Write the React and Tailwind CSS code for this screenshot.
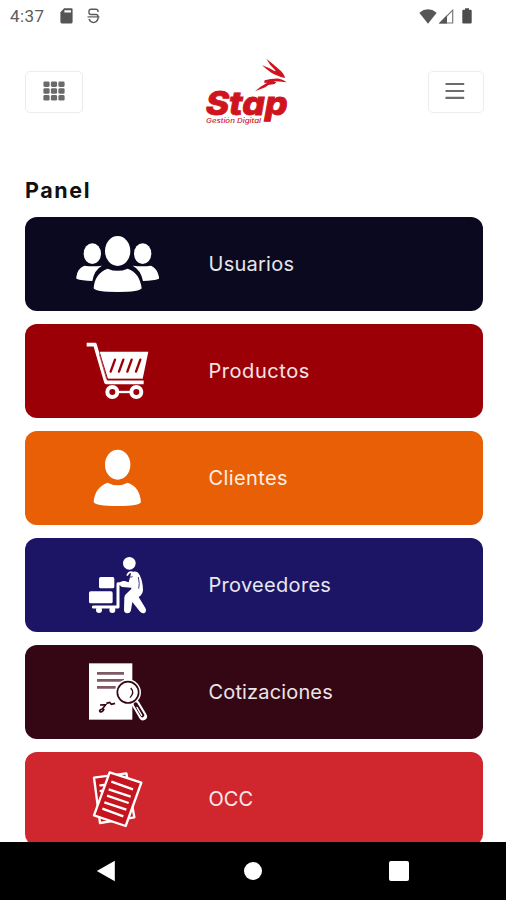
import React from 'react';

// --- Status Bar Icons ---

const SdCardIcon = () => (
  <svg className="w-[13px] h-4" viewBox="0 0 13 16" fill="#555555">
    <path fillRule="evenodd" d="M4.2 0.3H11.3Q12.6 0.3 12.6 1.6V14Q12.6 15.4 11.3 15.4H1.7Q0.4 15.4 0.4 14V4.2ZM4.4 2.2V4.6H11V2.2Z" />
  </svg>
);

const DebugIcon = () => (
  <svg className="w-[13px] h-4" viewBox="0 0 13 16" fill="none" stroke="#5a5a5a" strokeWidth="1.4">
    <path d="M11 4V3Q11 1.2 9 1.2H4Q2 1.2 2 3V4.5Q2 6.5 4 6.5H9Q11 6.5 11 8.5V11Q10 14 6.5 14.6Q3 14 2 11" />
    <path d="M0.5 8.9H12.5" strokeWidth="1.2" />
  </svg>
);

const WifiIcon = () => (
  <svg className="w-[18px] h-[15px]" viewBox="0 0 18 15" fill="#565656">
    <path d="M0.3 3.7Q9 -3 17.7 3.7L9 14.7Z" />
  </svg>
);

const SignalIcon = () => (
  <svg className="w-4 h-[15px]" viewBox="0 0 16 15">
    <path d="M2 14L14.7 1.2V14Z" fill="none" stroke="#7a7a7a" strokeWidth="1.2" />
    <path d="M1 14.5L9 6.3V14.5Z" fill="#565656" />
  </svg>
);

const BatteryIcon = () => (
  <svg className="w-[10px] h-4" viewBox="0 0 10 16" fill="#4d4d4d">
    <path d="M3 0.3H7V1.7H8.6Q9.7 1.7 9.7 2.8V14.5Q9.7 15.6 8.6 15.6H1.4Q0.3 15.6 0.3 14.5V2.8Q0.3 1.7 1.4 1.7H3Z" />
  </svg>
);

// --- Header Icons ---

const GridIcon = () => (
  <svg className="w-[22px] h-5 mb-[2px]" viewBox="0 0 22 20" fill="#6a6a6a">
    {[0.4, 7.9, 15.4].map((x) =>
      [0.4, 7.2, 14].map((y) => (
        <rect key={`${x}-${y}`} x={x} y={y} width="6.2" height="5.6" rx="1.4" />
      ))
    )}
  </svg>
);

const MenuIcon = () => (
  <svg className="w-5 h-[18px] mb-[2px] mr-[2px]" viewBox="0 0 20 18" stroke="#6c6c6c" strokeWidth="2.2">
    <path d="M0.5 2H19.2M0.5 9H19.2M0.5 15.8H19.2" />
  </svg>
);

const Logo = () => (
  <svg className="w-[105px] h-20" viewBox="0 0 315 240" fill="#cf1420">
    <path d="M214 26Q236 43 251 57Q267 69 270 84Q244 77 229 68Q210 55 201 46Q222 53 240 64L242 62Q224 46 214 26Z" />
    <path d="M209 91Q229 85 252 86Q265 88 275 97Q251 94 235 94L244 97L239 102L220 105L211 112L180 124Q194 111 209 103L216 98H207Z" />
    <text x="32" y="194" fontFamily="Inter, sans-serif" fontWeight="800" fontStyle="italic" fontSize="96" stroke="#cf1420" strokeWidth="2.5" textLength="246" lengthAdjust="spacingAndGlyphs">Stap</text>
    <text x="33" y="219" fontFamily="Inter, sans-serif" fontWeight="500" fontStyle="italic" fontSize="18" textLength="165" lengthAdjust="spacingAndGlyphs">Gestión Digital</text>
  </svg>
);

// --- Panel Icons ---

const UsersIcon = () => (
  <svg className="w-[120px] h-[90px]" viewBox="0 -3 360 270" fill="white">
    <ellipse cx="97" cy="101" rx="26" ry="31" />
    <ellipse cx="248" cy="101" rx="26" ry="31" />
    <path d="M49 171Q52 145 73 137Q98 141 126 137Q103 149 97 183Q65 182 49 176Z" />
    <path d="M297 171Q292 145 273 137Q248 141 218 137Q242 149 249 183Q281 182 297 176Z" />
    <ellipse cx="173" cy="93" rx="38" ry="45" />
    <path d="M101 205Q104 160 143 146Q172 159 203 146Q239 158 245 205Q240 216 173 216Q106 216 101 205Z" />
  </svg>
);

const CartIcon = () => (
  <svg className="w-[120px] h-[90px]" viewBox="0 -6 360 270">
    <path d="M119 71H265L248 152H144Z" fill="white" />
    <path d="M80 50H105L138 163H251" fill="none" stroke="white" strokeWidth="11" strokeLinejoin="round" />
    <path d="M118 78L140 154H244" fill="none" stroke="#9c0007" strokeWidth="2" />
    <path d="M165 95L152 131M190 95L177 131M215 95L202 131M241 95L228 131" stroke="#9c0007" strokeWidth="7" strokeLinecap="round" />
    <path d="M157 192H229" stroke="white" strokeWidth="7" />
    <circle cx="157" cy="192" r="15" fill="#9c0007" stroke="white" strokeWidth="12" />
    <circle cx="229" cy="192" r="15" fill="#9c0007" stroke="white" strokeWidth="12" />
  </svg>
);

const UserIcon = () => (
  <svg className="w-[120px] h-[90px]" viewBox="0 -6 360 270" fill="white">
    <ellipse cx="173" cy="89" rx="38" ry="45" />
    <path d="M101 201Q104 157 143 143Q172 159 203 143Q239 155 243 201Q239 213 173 213Q106 213 101 201Z" />
  </svg>
);

const SupplierIcon = () => (
  <svg className="w-[120px] h-[90px]" viewBox="0 -6 360 270" fill="white">
    <circle cx="208" cy="64" r="19" />
    <rect x="117" y="105" width="46" height="34" rx="5" />
    <rect x="87" y="148" width="71" height="36" rx="5" />
    <path d="M198 125H174V195H100" fill="none" stroke="white" strokeWidth="9" strokeLinejoin="round" strokeLinecap="round" />
    <circle cx="117" cy="204" r="9" />
    <circle cx="157" cy="204" r="9" />
    <path d="M214 91Q231 84 239 99Q249 120 249 145Q248 158 236 165L256 198Q261 208 254 213Q246 216 239 208L217 180L213 204Q211 214 202 214Q192 213 192 203L193 166Q194 158 202 152L214 141V137L187 135Q178 132 180 122Q182 116 194 117L206 121Z" />
    <path d="M208 103Q213 109 218 103M235 105Q240 127 236 140" fill="none" stroke="#1c1464" strokeWidth="2.5" />
    <path d="M201 101Q207 87 219 92" fill="none" stroke="white" strokeWidth="5" />
  </svg>
);

const QuoteIcon = () => (
  <svg className="w-[120px] h-[90px]" viewBox="0 -3 360 270">
    <rect x="87" y="46" width="130" height="169" fill="white" />
    <path d="M111 76H192M111 97H192M111 118H167" stroke="#7d5a63" strokeWidth="8" />
    <path d="M120 171L137 170L127 183Q116 186 120 191Q128 194 132 182M139 166L149 163L154 169L165 166" fill="none" stroke="#350614" strokeWidth="5" />
    <path d="M227 168L249 205" stroke="white" strokeWidth="24" strokeLinecap="round" />
    <circle cx="204" cy="133" r="39" fill="white" />
    <path d="M227 169L247 202" stroke="#350614" strokeWidth="12" strokeLinecap="round" />
    <path d="M231 178L245 202" stroke="white" strokeWidth="4" strokeLinecap="round" />
    <circle cx="204" cy="133" r="32" fill="white" stroke="#350614" strokeWidth="5" />
    <path d="M212 120Q225 133 210 149" fill="none" stroke="#350614" strokeWidth="4" />
  </svg>
);

const OrdersIcon = () => (
  <svg className="w-[120px] h-[90px]" viewBox="0 -3 360 270" fill="#c5161f" stroke="white" strokeWidth="7" strokeLinejoin="round" strokeLinecap="round">
    <path d="M102 68L199 55L223 187L120 204Z" />
    <path d="M121 91L132 90M122 108L129 107" />
    <path d="M149 52L244 83L197 213L102 181Z" />
    <path d="M154 80L219 103M146 103L212 125M141 122L206 144M133 142L199 164M127 161L190 184" strokeLinecap="butt" />
  </svg>
);

const panelItems = [
  { label: 'Usuarios', icon: UsersIcon, color: 'bg-[#0b091f]', spacing: 'tracking-[0.25px]' },
  { label: 'Productos', icon: CartIcon, color: 'bg-[#9c0007]', spacing: 'tracking-[0.55px]' },
  { label: 'Clientes', icon: UserIcon, color: 'bg-[#e85f05]', spacing: 'tracking-[0.4px]' },
  { label: 'Proveedores', icon: SupplierIcon, color: 'bg-[#1c1464]', spacing: 'tracking-[0.3px]' },
  { label: 'Cotizaciones', icon: QuoteIcon, color: 'bg-[#350614]', spacing: 'tracking-[0.15px]' },
  { label: 'OCC', icon: OrdersIcon, color: 'bg-[#d0272f]', spacing: 'tracking-normal' },
];

// --- Page Sections ---

function StatusBar() {
  return (
    <div className="h-8 shrink-0 flex items-center justify-between pl-[10px] pr-[34px]">
      <div className="flex items-center">
        <span className="w-[50px] font-[Roboto] text-[17px] leading-none text-[#5c5c5c] tracking-[0.4px]">4:37</span>
        <SdCardIcon />
        <span className="w-[14px]" />
        <DebugIcon />
      </div>
      <div className="flex items-center">
        <WifiIcon />
        <span className="w-[1px]" />
        <SignalIcon />
        <span className="w-[8px]" />
        <BatteryIcon />
      </div>
    </div>
  );
}

function Header() {
  return (
    <header className="h-20 mt-[18px] shrink-0 flex items-center justify-between pl-[25px] pr-[22px]">
      <div className="w-[170px]">
        <button className="mt-[3px] w-[58px] h-[42px] flex items-center justify-center rounded-[5px] border border-[#ececec]">
          <GridIcon />
        </button>
      </div>
      <Logo />
      <button className="mt-[3px] ml-auto w-[56px] h-[42px] flex items-center justify-center rounded-[5px] border border-[#ececec]">
        <MenuIcon />
      </button>
    </header>
  );
}

function PanelCard({ label, icon: Icon, color, spacing }) {
  return (
    <button className={`h-[94px] shrink-0 flex items-center rounded-[12px] pl-[35px] text-left text-white/90 ${color}`}>
      <Icon />
      <span className={`ml-[28.5px] text-[20px] leading-none ${spacing}`}>{label}</span>
    </button>
  );
}

function NavBar() {
  return (
    <nav className="h-[58px] shrink-0 bg-black flex items-center justify-between pl-[96px] pr-[97px]">
      <svg className="w-5 h-[22px]" viewBox="0 0 20 22" fill="white">
        <path d="M0.8 11L18.8 0.7V21.3Z" />
      </svg>
      <span className="ml-px w-[18px] h-[18px] rounded-full bg-white" />
      <span className="w-5 h-5 rounded-[2px] bg-white" />
    </nav>
  );
}

export default function App() {
  return (
    <div className="w-[506px] h-[900px] flex flex-col overflow-hidden bg-white font-[Inter,sans-serif]">
      <StatusBar />
      <Header />
      <main className="flex-1 min-h-0 overflow-hidden flex flex-col pt-[47px] pl-[25px] pr-[23px]">
        <h1 className="h-[40px] shrink-0 pt-px text-[21.5px] leading-6 font-bold text-[#111111] tracking-[1.6px]">Panel</h1>
        <div className="flex flex-col gap-[13px]">
          {panelItems.map((item) => (
            <PanelCard key={item.label} {...item} />
          ))}
        </div>
      </main>
      <NavBar />
    </div>
  );
}
